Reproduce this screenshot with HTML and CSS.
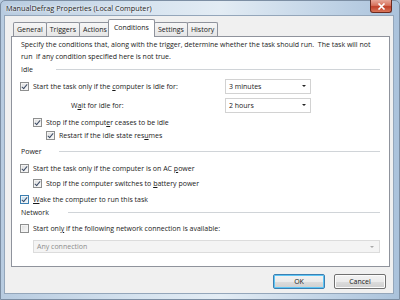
FILE: index.html
```
<html lang="en">
    <head>
        <meta charset="UTF-8" />
        <title>ManualDefrag Properties (Local Computer)</title>
        <link rel="stylesheet" href="styles.css">
    </head>
    <body>
        <div class="window">
            <div class="titlebar">
                <span class="title">ManualDefrag Properties (Local Computer)</span>
                <div class="close">
                    <svg width="9" height="7" viewBox="0 0 9 7">
                        <path d="M1.5 0.5 L7.5 6.5 M7.5 0.5 L1.5 6.5" stroke="#fff" stroke-width="1.6" />
                    </svg>
                </div>
            </div>
            <div class="client">
                <div class="tabs">
                    <div class="tab">General</div>
                    <div class="tab">Triggers</div>
                    <div class="tab">Actions</div>
                    <div class="tab active">Conditions</div>
                    <div class="tab">Settings</div>
                    <div class="tab">History</div>
                </div>
                <div class="panel">
                    <p class="intro">Specify the conditions that, along with the trigger, determine whether the task should run.&nbsp; The task will not<br>run&nbsp; if any condition specified here is not true.</p>

                    <div class="group idle"><span class="group-label">Idle</span><span class="rule"></span></div>

                    <div class="row r1">
                        <span class="check on"></span>
                        <span class="label">Start the task only if the <u>c</u>omputer is idle for:</span>
                        <div class="combo"><span>3 minutes</span><span class="arrow"></span></div>
                    </div>
                    <div class="row r2">
                        <span class="label wait">W<u>a</u>it for idle for:</span>
                        <div class="combo"><span>2 hours</span><span class="arrow"></span></div>
                    </div>
                    <div class="row r3 indent1">
                        <span class="check on"></span>
                        <span class="label">Stop if the comput<u>e</u>r ceases to be idle</span>
                    </div>
                    <div class="row r4 indent2">
                        <span class="check on"></span>
                        <span class="label">Restart if the idle state res<u>u</u>mes</span>
                    </div>

                    <div class="group power"><span class="group-label">Power</span><span class="rule"></span></div>

                    <div class="row r5">
                        <span class="check on"></span>
                        <span class="label">Start the task only if the computer is on AC <u>p</u>ower</span>
                    </div>
                    <div class="row r6 indent1">
                        <span class="check on"></span>
                        <span class="label">Stop if the computer switches to <u>b</u>attery power</span>
                    </div>
                    <div class="row r7">
                        <span class="check on hot"></span>
                        <span class="label"><u>W</u>ake the computer to run this task</span>
                    </div>

                    <div class="group network"><span class="group-label">Network</span><span class="rule"></span></div>

                    <div class="row r8">
                        <span class="check"></span>
                        <span class="label">Start onl<u>y</u> if the following network connection is available:</span>
                    </div>
                    <div class="combo wide disabled"><span>Any connection</span><span class="arrow"></span></div>
                </div>
                <div class="buttons">
                    <button class="default">OK</button>
                    <button>Cancel</button>
                </div>
            </div>
        </div>
    </body>
</html>
```
FILE: styles.css
```
* {
    margin: 0;
    padding: 0;
    box-sizing: border-box;
}

body {
    width: 400px;
    height: 300px;
    overflow: hidden;
    font-family: "Open Sans", "Noto Sans", sans-serif;
    font-size: 7px;
    color: #1a1a1a;
    background: linear-gradient(90deg, #b7cbe0 0%, #d6e3ef 35%, #e3ecf4 55%, #c3d5e7 80%, #aac2db 100%);
}

.window {
    display: flex;
    flex-direction: column;
    height: 300px;
    border: 1px solid #7c8ea3;
    border-radius: 5px 5px 0 0;
}

.titlebar {
    display: flex;
    align-items: center;
    justify-content: space-between;
    height: 17px;
    padding: 0 7px 0 5px;
}

.title {
    font-size: 7.3px;
    color: #222;
    text-shadow: 0 0 4px #fff, 0 0 2px #fff;
}

.close {
    display: flex;
    align-items: center;
    justify-content: center;
    width: 22px;
    height: 13px;
    margin-top: -3px;
    border: 1px solid #6b2a1f;
    border-top: 0;
    border-radius: 0 0 3px 3px;
    background: linear-gradient(#e8a89a 0%, #d7735e 45%, #c0402a 55%, #d9765a 100%);
}

.client {
    flex: 1;
    display: flex;
    flex-direction: column;
    margin: 0 5px 5px 3px;
    padding: 3px 3px 4px 6px;
    background: #f0f0f0;
    border: 1px solid #94a6ba;
}

.tabs {
    display: flex;
    align-items: flex-end;
    height: 17px;
    padding-left: 2px;
}

.tab {
    height: 14px;
    padding: 0 3px;
    line-height: 13px;
    border: 1px solid #8f939c;
    border-bottom: 0;
    margin-right: -1px;
    background: linear-gradient(#f6f6f6, #e6e6e6);
    border-radius: 2px 2px 0 0;
}

.tab.active {
    position: relative;
    height: 18px;
    margin: 0 -1px -1px -2px;
    padding: 0 5px;
    line-height: 16px;
    background: #fff;
    z-index: 1;
}

.panel {
    height: 231px;
    padding: 2px 9px 0 8px;
    background: #fff;
    border: 1px solid #8f939c;
}

.intro {
    line-height: 12px;
    padding-left: 1px;
    white-space: nowrap;
}

.group {
    display: flex;
    align-items: center;
    height: 12px;
    padding-left: 1px;
}

.group-label {
    margin-right: 17px;
}

.idle .group-label {
    min-width: 35px;
    margin-right: 0;
}

.network .group-label {
    margin-right: 19px;
}

.rule {
    flex: 1;
    height: 1px;
    background: #d0d4d8;
}

.row {
    display: flex;
    align-items: center;
    height: 14px;
}

.r1, .r2 {
    height: 16px;
    margin-top: 3px;
}

.r3 { margin-top: 3px; height: 13px; }
.r4 { height: 13px; }
.r5 { margin-top: 4px; }
.r6 { margin-top: 1px; }
.r7 { margin-top: 2px; }
.r8 { margin-top: 3px; }

.power { margin-top: 3px; }

.indent1 { padding-left: 13px; }
.indent2 { padding-left: 26px; }

.check {
    position: relative;
    flex: none;
    width: 9px;
    height: 9px;
    margin-right: 4px;
    border: 1px solid #8e8f8f;
    background: linear-gradient(135deg, #dcdcdc, #fbfbfb);
    box-shadow: inset 0 0 0 1px #f4f4f4;
}

.check.on::after {
    content: "";
    position: absolute;
    left: 2px;
    top: 0px;
    width: 2px;
    height: 5px;
    border: solid #3d4c66;
    border-width: 0 1.4px 1.4px 0;
    transform: rotate(40deg);
}

.check.hot {
    border-color: #3c7fb1;
    background: linear-gradient(135deg, #b9dcf3, #f1f8fd);
}

.label {
    white-space: nowrap;
}

.label.wait {
    margin-left: 51px;
}

.combo {
    display: flex;
    align-items: center;
    justify-content: space-between;
    width: 86px;
    height: 15px;
    margin-left: auto;
    margin-right: 69px;
    padding: 0 4px 0 3px;
    border: 1px solid #d2d2d2;
    background: #fff;
}

.arrow {
    width: 0;
    height: 0;
    border-left: 2px solid transparent;
    border-right: 2px solid transparent;
    border-top: 2.5px solid #222;
}

.combo.wide {
    width: auto;
    height: 13px;
    margin: 5px 0 0 13px;
    padding-right: 5px;
    border-color: #dcdcdc;
    background: #f4f4f4;
    color: #8d8d8d;
}

.combo.disabled .arrow {
    border-top-color: #a9a9a9;
}

.buttons {
    display: flex;
    justify-content: flex-end;
    gap: 9px;
    margin-top: 7px;
    padding-right: 4px;
}

button {
    width: 52px;
    height: 15px;
    font-family: inherit;
    font-size: 7px;
    color: #1a1a1a;
    border: 1px solid #707070;
    border-radius: 2px;
    background: linear-gradient(#f2f2f2 0%, #ebebeb 50%, #dddddd 51%, #cfcfcf 100%);
    box-shadow: inset 0 0 0 1px #fcfcfc;
}

button.default {
    border-color: #3c7fb1;
    box-shadow: inset 0 0 0 1px #5ec6f6;
}
```
